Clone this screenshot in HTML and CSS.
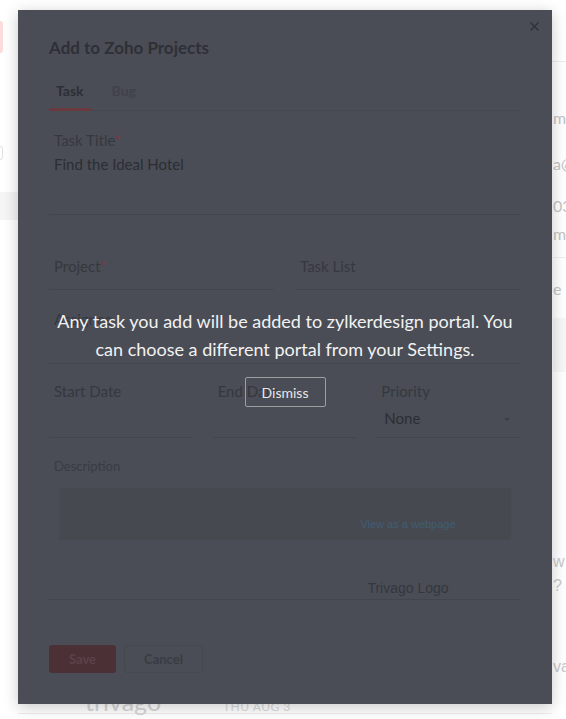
FILE: index.html
```html
<!DOCTYPE html>
<html>
	<head>
		<meta charset="utf-8" />
		<title>Add to Zoho Projects</title>
		<link rel="stylesheet" href="styles.css">
	</head>
	<body>
		<div class="page">
			<div class="rail-left">
				<div class="rail-btn"></div>
				<div class="rail-box"></div>
				<div class="rail-band"></div>
			</div>

			<div class="main">
				<div class="mail-row">
					<span class="mail-from">trivago</span>
					<span class="mail-date">THU AUG 3</span>
				</div>
			</div>

			<div class="rail-right">
				<div class="info-head"></div>
				<p class="r1">mail</p>
				<p class="r2">a@zylker.com</p>
				<p class="r3">03:45 PM</p>
				<p class="r4">m</p>
				<div class="info-line"></div>
				<p class="r5">e notes</p>
				<div class="info-band"></div>
				<p class="r6 light">w</p>
				<p class="r7 light">?</p>
				<p class="r8 light">vago</p>
			</div>
		</div>

		<!-- dialog -->
		<div class="modal">
			<svg class="close" viewBox="0 0 9 9" width="9" height="9">
				<path d="M0.5 0.5L8.5 8.5M8.5 0.5L0.5 8.5" stroke="#2e3037" stroke-width="1.1" fill="none"/>
			</svg>

			<h2 class="modal-title">Add to Zoho Projects</h2>

			<div class="tabs">
				<span class="tab active">Task</span>
				<span class="tab">Bug</span>
			</div>

			<div class="field f-title">
				<div class="field-label">Task Title<span class="req">*</span></div>
				<div class="field-value">Find the Ideal Hotel</div>
			</div>

			<div class="row-2">
				<div class="field f-short">
					<div class="field-label">Project<span class="req">*</span></div>
				</div>
				<div class="field f-short">
					<div class="field-label">Task List</div>
				</div>
			</div>

			<div class="field f-assign">
				<div class="field-label">Assignee</div>
			</div>

			<div class="row-3">
				<div class="field f-date">
					<div class="field-label">Start Date</div>
					<div class="field-value">&nbsp;</div>
				</div>
				<div class="field f-date">
					<div class="field-label">End Date</div>
					<div class="field-value">&nbsp;</div>
				</div>
				<div class="field f-date">
					<div class="field-label">Priority</div>
					<div class="field-value select-value">
						<span>None</span>
						<span class="caret"></span>
					</div>
				</div>
			</div>

			<div class="desc">
				<div class="field-label">Description</div>
				<div class="preview-head">
					<a href="#" class="web-link">View as a webpage</a>
				</div>
				<div class="preview-body">
					<span>Trivago Logo</span>
				</div>
			</div>

			<div class="actions">
				<button type="button" class="btn btn-save">Save</button>
				<button type="button" class="btn btn-cancel">Cancel</button>
			</div>

			<!-- portal notice over the form -->
			<div class="notice">
				<p>Any task you add will be added to zylkerdesign portal. You can choose a different portal from your Settings.</p>
				<button type="button" class="dismiss">Dismiss</button>
			</div>
		</div>
	</body>
</html>
```

FILE: styles.css
```css
html, body {
    margin: 0;
    padding: 0;
}

body {
    width: 566px;
    height: 719px;
    overflow: hidden;
    position: relative;
    background: #fff;
    font-family: Lato, "Open Sans", sans-serif;
}

/* page behind the dialog */
.page {
    display: grid;
    grid-template-columns: 18px 1fr 14px;
    height: 719px;
}

.rail-left {
    padding-top: 21px;
}

    .rail-btn {
        width: 3px;
        height: 32px;
        background: #fbdcdc;
        border-radius: 0 4px 4px 0;
    }

    .rail-box {
        margin-top: 93px;
        width: 2px;
        height: 12px;
        border: 1px solid #e2e2e2;
        border-left: 0;
        border-radius: 0 3px 3px 0;
    }

    .rail-band {
        margin-top: 32px;
        height: 28px;
        background: #f5f5f5;
    }

.main {
    padding-top: 689px;
}

.mail-row {
    display: flex;
    align-items: baseline;
    height: 24px;
    line-height: 24px;
    padding-left: 67px;
    border-bottom: 1px solid #ededed;
    color: #d6d6d6;
    white-space: nowrap;
}

    .mail-from {
        font-size: 25px;
        width: 138px;
    }

    .mail-date {
        font-size: 12px;
        letter-spacing: 0.5px;
        color: #dadada;
    }

.rail-right {
    padding-left: 1px;
    white-space: nowrap;
    color: #c4c4c4;
}

    .rail-right p {
        margin: 0;
        font-size: 16px;
        line-height: 20px;
    }

    .rail-right .light {
        font-family: "Liberation Sans", Arial, sans-serif;
        color: #c9c9c9;
    }

    .info-head {
        height: 61px;
        border-bottom: 1px solid #eee;
        margin-left: -1px;
    }

    .r1 { margin-top: 46px !important; }
    .r2 { margin-top: 26px !important; }
    .r3 { margin-top: 22px !important; }
    .r4 { margin-top: 8px !important; }
    .r5 { margin-top: 21px !important; }
    .r6 { margin-top: 180px !important; }
    .r7 { margin-top: 4px !important; }
    .r8 { margin-top: 61px !important; }

    .info-line {
        margin-top: 13px;
        height: 1px;
        background: #f0f0f0;
    }

    .info-band {
        margin-top: 19px;
        height: 54px;
        background: #f7f7f7;
    }

/* dialog */
.modal {
    position: absolute;
    left: 18px;
    top: 10px;
    width: 534px;
    height: 694px;
    box-sizing: border-box;
    padding: 27px 32px 0 31px;
    background: #4a4d55;
    box-shadow: 0 3px 14px rgba(0, 0, 0, 0.22);
}

.close {
    position: absolute;
    top: 12px;
    right: 13px;
}

.modal-title {
    margin: 0;
    font-size: 17px;
    font-weight: 700;
    line-height: 22px;
    color: #2e3037;
}

.tabs {
    display: flex;
    gap: 14px;
    margin-top: 22px;
    border-bottom: 1px solid #44474e;
}

    .tab {
        padding: 0 7px 7px;
        margin-bottom: -1px;
        font-size: 14px;
        font-weight: 700;
        line-height: 20px;
        color: #3f4249;
        border-bottom: 3px solid transparent;
    }

    .tab.active {
        color: #2c2f35;
        border-bottom-color: #6a3a3f;
    }

.field {
    padding-left: 5px;
    border-bottom: 1px solid #42454c;
}

.field-label {
    font-size: 15px;
    line-height: 20px;
    color: #35383f;
}

    .req {
        color: #7b3a40;
    }

.field-value {
    margin-top: 4px;
    font-size: 15px;
    line-height: 20px;
    color: #2b2e34;
}

.f-title {
    margin-top: 19px;
    padding-bottom: 40px;
}

.row-2 {
    display: grid;
    grid-template-columns: 1fr 1fr;
    gap: 21px;
    margin-top: 41px;
}

.f-short {
    padding-bottom: 13px;
}

.f-assign {
    margin-top: 19px;
    padding-bottom: 34px;
}

.row-3 {
    display: grid;
    grid-template-columns: 1fr 1fr 1fr;
    gap: 20px;
    margin-top: 17px;
}

    .f-date {
        padding-bottom: 9px;
    }

    .f-date .field-value {
        margin-top: 7px;
    }

.select-value {
    display: flex;
    align-items: center;
    justify-content: space-between;
    padding: 0 10px 0 3px;
}

    .caret {
        width: 0;
        height: 0;
        margin-top: 3px;
        border-left: 3px solid transparent;
        border-right: 3px solid transparent;
        border-top: 3px solid #3a3d44;
    }

.desc {
    margin-top: 19px;
    padding-bottom: 3px;
    border-bottom: 1px solid #42454c;
}

    .desc .field-label {
        padding-left: 5px;
        font-size: 13px;
        line-height: 18px;
        color: #393c43;
    }

.preview-head {
    margin: 13px 9px 0 10px;
    height: 52px;
    box-sizing: border-box;
    padding: 29px 0 0 246px;
    background: #464950;
    text-align: center;
    font-family: "Liberation Sans", Arial, sans-serif;
    font-size: 11px;
    line-height: 14px;
}

    .web-link {
        color: #415d73;
        text-decoration: none;
    }

.preview-body {
    margin-top: 40px;
    padding-left: 247px;
    text-align: center;
    font-family: "Liberation Sans", Arial, sans-serif;
    font-size: 14px;
    line-height: 16px;
    color: #34373d;
}

.actions {
    display: flex;
    gap: 8px;
    margin-top: 45px;
}

.btn {
    height: 28px;
    padding: 0;
    font-family: Lato, "Open Sans", sans-serif;
    font-size: 13px;
    font-weight: 700;
    border-radius: 3px;
    cursor: pointer;
}

.btn-save {
    width: 67px;
    background: #4b3036;
    border: 0;
    color: #5c4248;
}

.btn-cancel {
    width: 79px;
    background: transparent;
    border: 1px solid #45484f;
    color: #393c43;
}

/* notice lying over the form */
.notice {
    position: absolute;
    left: 0;
    right: 0;
    top: 297px;
    text-align: center;
}

    .notice p {
        width: 470px;
        margin: 0 auto;
        font-size: 18px;
        line-height: 28px;
        color: #f2f2f2;
    }

    .dismiss {
        margin-top: 14px;
        width: 81px;
        height: 30px;
        padding: 0;
        background: transparent;
        border: 1px solid #9c9ea2;
        border-radius: 2px;
        font-family: Lato, "Open Sans", sans-serif;
        font-size: 14px;
        color: #e8e8e8;
        cursor: pointer;
    }
```
